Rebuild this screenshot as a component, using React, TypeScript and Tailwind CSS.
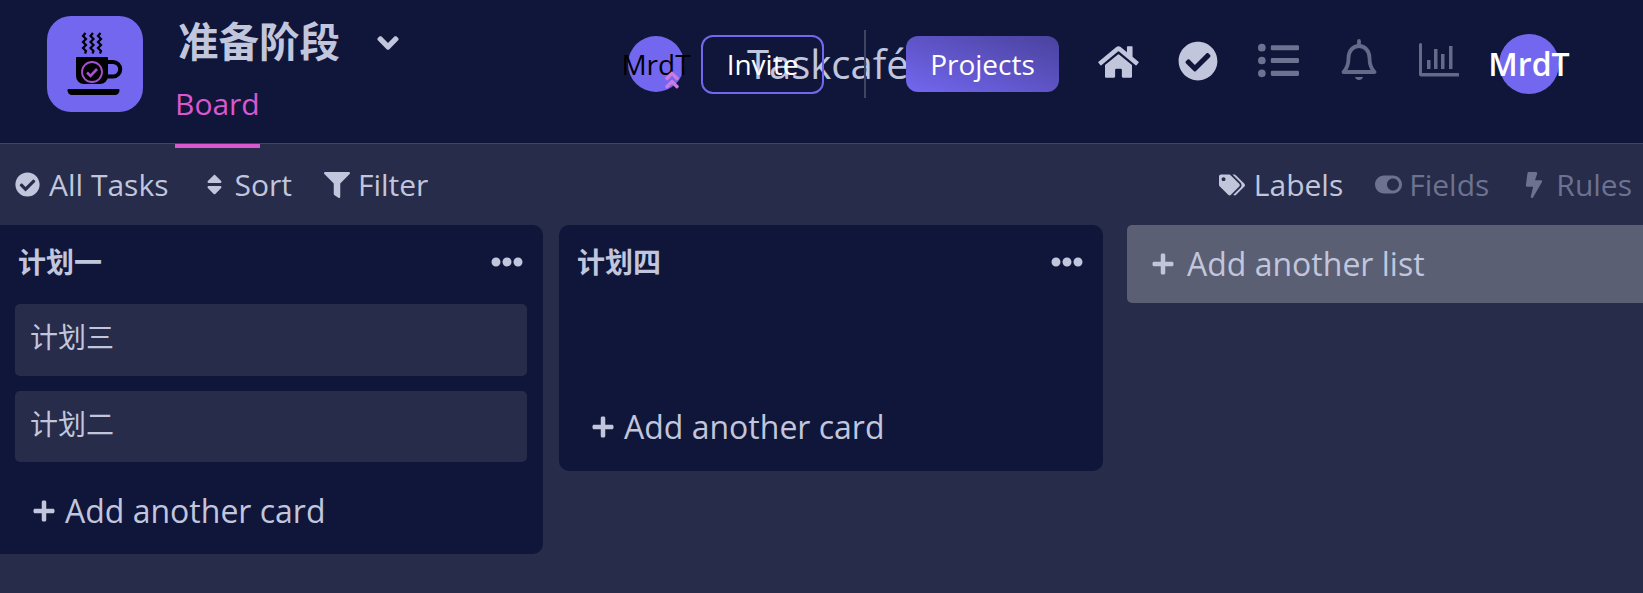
import React from "react";
import {
  FaAngleDoubleUp,
  FaAngleDown,
  FaBolt,
  FaCheckCircle,
  FaEllipsisH,
  FaFilter,
  FaHome,
  FaListUl,
  FaPlus,
  FaSort,
  FaTags,
  FaToggleOn,
} from "react-icons/fa";

const font = { fontFamily: '"Open Sans", "Noto Sans CJK SC", sans-serif' };

const steam = "l-2.500 3l3 3l-3 3l3 3l-3 3l3 3l-1 2.500";

function Logo() {
  return (
    <div className="w-[96px] h-[96px] shrink-0 rounded-[24px] bg-[#7367f0]">
      <svg viewBox="0 0 96 96" className="w-full h-full">
        <g fill="none" stroke="#000" strokeWidth="2.200">
          <path d={`M38.500 17${steam}`} />
          <path d={`M46 17${steam}`} />
          <path d={`M53.500 17${steam}`} />
        </g>
        <path d="M30 41h30a1 1 0 0 1 1 1v18a8 8 0 0 1-8 8H37a8 8 0 0 1-8-8V42a1 1 0 0 1 1-1z" fill="#000" />
        <path d="M60 46h6a7.200 7.200 0 0 1 0 14.500h-6" fill="none" stroke="#000" strokeWidth="4" />
        <path d="M21.500 73h50a1 1 0 0 1 1 1c0 3-2 5-5 5h-42c-3 0-5-2-5-5a1 1 0 0 1 1-1z" fill="#000" />
        <circle cx="45" cy="56" r="10" fill="none" stroke="#a84fd4" strokeWidth="1.800" />
        <path d="M40 56.500l3.500 3.500l6.500-7" fill="none" stroke="#a84fd4" strokeWidth="2.600" />
      </svg>
    </div>
  );
}

function Bell() {
  return (
    <svg viewBox="0 0 36 42" className="w-[36px] h-[42px]" fill="none" stroke="#646a87" strokeWidth="3.800">
      <path d="M18 2v5" strokeLinecap="round" />
      <path d="M2.500 33c4-4 5-8 5-14c0-7 4.500-12 10.500-12s10.500 5 10.500 12c0 6 1 10 5 14z" strokeLinejoin="round" />
      <path d="M14 38c.5 2 2 3 4 3s3.500-1 4-3z" fill="#646a87" stroke="none" />
    </svg>
  );
}

function Chart() {
  return (
    <svg viewBox="0 0 40 34" className="w-[40px] h-[34px]" fill="#646a87">
      <path d="M0 1.500A1.500 1.500 0 0 1 3 1.500V30h36a1.500 1.500 0 0 1 0 3.500H2a2 2 0 0 1-2-2z" />
      <rect x="8" y="17" width="3.500" height="9" />
      <rect x="15" y="6" width="3.500" height="20" />
      <rect x="22" y="11" width="3.500" height="15" />
      <rect x="30" y="3" width="3.500" height="23" />
    </svg>
  );
}

function Toolbar() {
  return (
    <div className="flex items-center justify-between h-[81px] text-[30px] text-[#c2c6dc]">
      <div className="flex items-center">
        <div className="flex items-center ml-[15px]">
          <FaCheckCircle className="w-[25px] h-[25px]" />
          <span className="ml-[9px]">All Tasks</span>
        </div>
        <div className="flex items-center ml-[38px]">
          <FaSort className="w-[17px] h-[25px]" />
          <span className="ml-[11px]">Sort</span>
        </div>
        <div className="flex items-center ml-[32px]">
          <FaFilter className="w-[26px] h-[26px]" />
          <span className="ml-[8px]">Filter</span>
        </div>
      </div>
      <div className="flex items-center mr-[11px]">
        <div className="flex items-center">
          <FaTags className="w-[26px] h-[26px]" />
          <span className="ml-[9px]">Labels</span>
        </div>
        <div className="flex items-center ml-[32px] text-[#6d7290]">
          <FaToggleOn className="w-[27px] h-[27px]" />
          <span className="ml-[7px]">Fields</span>
        </div>
        <div className="flex items-center ml-[35px] text-[#6d7290]">
          <FaBolt className="w-[20px] h-[26px]" />
          <span className="ml-[12px]">Rules</span>
        </div>
      </div>
    </div>
  );
}

function AddCard() {
  return (
    <div className="flex items-center pl-[32px] text-[32px] text-[#c2c6dc]">
      <FaPlus className="w-[24px] h-[24px]" />
      <span className="ml-[9px]">Add another card</span>
    </div>
  );
}

function ListHeader({ title }: { title: string }) {
  return (
    <div className="flex items-center justify-between h-[74px] pl-[18px] pr-[20px] text-[#c2c6dc]">
      <span className="text-[28px] font-bold">{title}</span>
      <FaEllipsisH className="w-[32px] h-[32px]" />
    </div>
  );
}

function Card({ title, height }: { title: string; height: string }) {
  return (
    <div className={`ml-[15px] mr-[16px] pl-[15px] pt-[12px] rounded-[5px] bg-[#262c49] text-[28px] text-[#c2c6dc] ${height}`}>
      {title}
    </div>
  );
}

export default function App() {
  return (
    <div className="w-[1643px] h-[593px] overflow-hidden bg-[#262c49]" style={font}>
      <header className="relative flex h-[144px] bg-[#10163a] border-b border-[#414561]">
        <div className="flex pl-[47px] pt-[16px]">
          <Logo />
          <div className="ml-[32px] -mt-[16px] relative">
            <div className="flex items-center h-[85px] pl-[3px]">
              <span className="text-[40.5px] font-bold text-[#c2c6dc]">准备阶段</span>
              <FaAngleDown className="ml-[31px] w-[34px] h-[34px] text-[#c2c6dc]" />
            </div>
            <div className="relative w-[85px] h-[58px] -mt-[1px] text-[30px] leading-[40px] text-[#d958d0]">
              Board
              <div className="absolute left-0 right-0 top-[60px] h-[4px] bg-[#d958d0]" />
            </div>
          </div>
        </div>

        <div className="ml-auto flex items-center h-[128px] mr-[84px]">
          <div className="relative flex items-center justify-center w-[56px] h-[56px] rounded-full bg-[#7367f0] text-[28px] text-black">
            <span className="whitespace-nowrap">MrdT</span>
            <FaAngleDoubleUp className="absolute left-[33px] top-[33px] w-[22px] h-[22px] text-[#cf7ae0]" />
          </div>
          <div className="relative z-10 ml-[17px] flex items-center justify-center w-[123px] h-[59px] rounded-[12px] border-2 border-[#7367f0] text-[28px] text-white">
            Invite
          </div>
          <div className="relative z-10 ml-[40px] w-[2px] h-[68px] bg-[#414561]" />
          <div className="relative z-10 ml-[40px] flex items-center justify-center w-[153px] h-[56px] rounded-[12px] bg-gradient-to-tr from-[#7367f0] to-[#4a429e] text-[28px] text-white">
            Projects
          </div>
          <FaHome className="ml-[39px] -mt-[5px] w-[41px] h-[36px] text-[#c2c6dc]" />
          <FaCheckCircle className="ml-[39px] -mt-[6px] w-[40px] h-[40px] text-[#c2c6dc]" />
          <FaListUl className="ml-[40px] -mt-[8px] w-[41px] h-[41px] text-[#6d7290]" />
          <div className="ml-[42px] -mt-[8px]">
            <Bell />
          </div>
          <div className="ml-[42px] -mt-[8px]">
            <Chart />
          </div>
          <div className="ml-[40px] -mt-[1px] flex items-center justify-center w-[60px] h-[60px] rounded-full bg-[#7367f0] text-[32px] font-semibold text-white">
            <span className="whitespace-nowrap">MrdT</span>
          </div>
        </div>

        <span className="absolute left-[747px] top-[37px] text-[40px] leading-[54px] text-[#c2c6dc]">Taskcafé</span>
      </header>

      <Toolbar />

      <div className="flex items-start">
        <div className="w-[543px] h-[329px] rounded-r-[10px] bg-[#10163a]">
          <ListHeader title="计划一" />
          <div className="flex flex-col gap-[15px] mt-[5px]">
            <Card title="计划三" height="h-[72px]" />
            <Card title="计划二" height="h-[71px]" />
          </div>
          <div className="mt-[25px]">
            <AddCard />
          </div>
        </div>
        <div className="ml-[16px] w-[544px] h-[246px] rounded-[10px] bg-[#10163a]">
          <ListHeader title="计划四" />
          <div className="mt-[104px]">
            <AddCard />
          </div>
        </div>
        <div className="ml-[24px] flex-1 flex items-center h-[78px] pl-[24px] rounded-l-[5px] bg-[#5a5f73] text-[32px] text-[#c2c6dc]">
          <FaPlus className="w-[24px] h-[24px]" />
          <span className="ml-[12px]">Add another list</span>
        </div>
      </div>
    </div>
  );
}
